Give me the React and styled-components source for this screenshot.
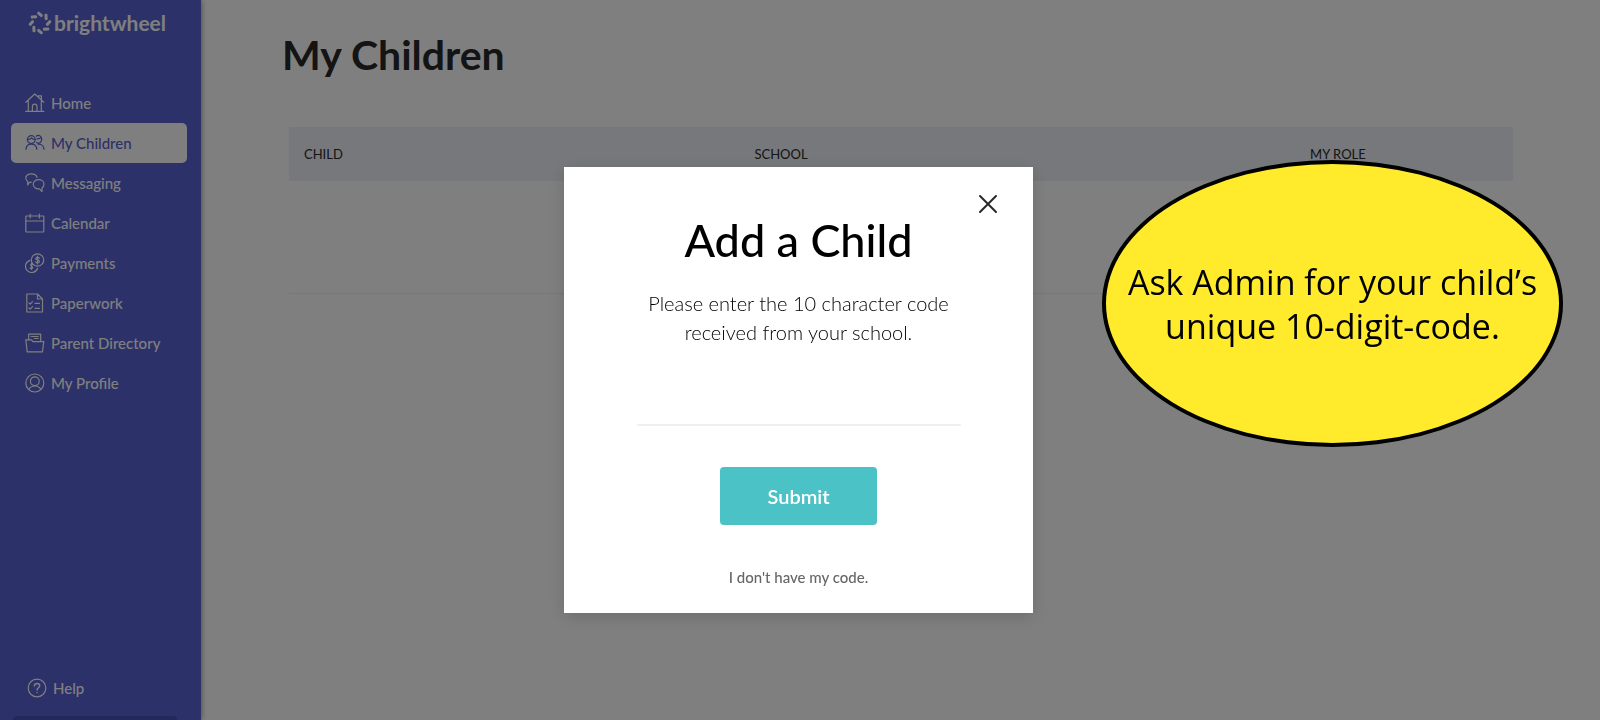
import React from 'react'
import styled, { createGlobalStyle } from 'styled-components'

const GlobalStyle = createGlobalStyle`
    * {
        box-sizing: border-box;
    }
    body {
        margin: 0;
        background: #fff;
        color: #282828;
        font-family: Lato, "Open Sans", sans-serif;
    }
`

const Page = styled.div`
    display: flex;
    min-height: 100vh;
`

const Sidebar = styled.aside`
    display: flex;
    flex-direction: column;
    flex: 0 0 201px;
    background: #5862d2;
    box-shadow: 1px 0 5px rgba(0, 0, 0, 0.35);
`

const Brand = styled.a`
    display: flex;
    align-items: center;
    gap: 2px;
    height: 63px;
    padding: 0 28px 17px;
    border-bottom: 1px solid #545ec9;
    color: #fff;
    font-size: 21px;
    font-weight: 700;
    line-height: 28px;
    text-decoration: none;
`

const Nav = styled.nav`
    display: flex;
    flex-direction: column;
    flex: 1;
    padding: 20px 14px 0 11px;
`

const NavLink = styled.a`
    display: flex;
    align-items: center;
    gap: 6px;
    height: 40px;
    padding: 0 14px;
    border-radius: 5px;
    background: ${props => props.$active ? '#fff' : 'transparent'};
    color: ${props => props.$active ? '#5862d2' : '#fff'};
    font-size: 15px;
    font-weight: 500;
    text-decoration: none;
    white-space: nowrap;
`

const SidebarFooter = styled.div`
    padding: 0 24px 0 13px;

    &::after {
        content: '';
        display: block;
        height: 4px;
        margin-top: 8px;
        border-radius: 4px 4px 0 0;
        background: #4650b8;
    }
`

const Main = styled.main`
    flex: 1;
    padding: 27px 87px 0 88px;
`

const PageTitle = styled.h1`
    margin: 0 0 44px -7px;
    font-size: 41px;
    font-weight: 700;
    line-height: 56px;
`

const ChildTable = styled.table`
    width: 100%;
    border-collapse: collapse;
    table-layout: fixed;

    th {
        height: 54px;
        padding: 0 15px;
        background: #eef0f6;
        font-size: 13px;
        font-weight: 400;
        text-align: left;
    }
    td {
        height: 112px;
        border-bottom: 1px solid #f0f0f2;
    }
`

const Column = styled.col`
    width: ${props => props.$width};
`

const Overlay = styled.div`
    position: fixed;
    inset: 0;
    display: flex;
    align-items: center;
    justify-content: center;
    padding: 60px 3px 0 0;
    background: rgba(0, 0, 0, 0.5);
`

const Modal = styled.form`
    display: flex;
    flex-direction: column;
    align-items: center;
    width: 469px;
    padding: 24px 34px 24px;
    background: #fff;
    box-shadow: 0 4px 16px rgba(0, 0, 0, 0.15);
    color: #000;
`

const CloseButton = styled.button`
    display: flex;
    align-self: flex-end;
    padding: 0;
    border: 0;
    background: none;
    color: #282828;
    cursor: pointer;
`

const ModalTitle = styled.h2`
    margin: 0;
    font-size: 45px;
    font-weight: 500;
    line-height: 46px;
`

const CodeLabel = styled.label`
    width: 324px;
    margin-top: 26px;
    font-size: 20px;
    font-weight: 300;
    line-height: 29px;
    text-align: center;
`

const CodeInput = styled.input`
    width: 324px;
    height: 50px;
    margin-top: 29px;
    border: 0;
    border-bottom: 2px solid #f0f0f0;
    background: none;
    font: inherit;
    font-size: 20px;
    text-align: center;
    outline: none;
`

const SubmitButton = styled.button`
    width: 157px;
    height: 58px;
    margin-top: 41px;
    border: 0;
    border-radius: 4px;
    background: #4bc2c5;
    color: #fff;
    font: inherit;
    font-size: 20px;
    font-weight: 600;
    cursor: pointer;
`

const NoCodeLink = styled.a`
    margin-top: 40px;
    color: #666;
    font-size: 15px;
    font-weight: 500;
    line-height: 24px;
    text-decoration: none;
`

const Callout = styled.aside`
    position: absolute;
    top: 160px;
    right: 37px;
    display: flex;
    align-items: center;
    justify-content: center;
    width: 461px;
    height: 287px;
    border: 4px solid #000;
    border-radius: 50%;
    background: #ffea2b;
    color: #000;
    font-family: "Open Sans", "Noto Sans", sans-serif;
    font-size: 34px;
    font-weight: 400;
    line-height: 44px;
    text-align: center;
    white-space: nowrap;
`

function Icon({ children }) {
    return (
        <svg width="20" height="20" viewBox="0 0 20 20" fill="none" stroke="currentColor" strokeWidth="1.2" strokeLinecap="round" strokeLinejoin="round" aria-hidden="true">
            {children}
        </svg>
    )
}

function Logo() {
    return (
        <svg width="24" height="24" viewBox="-12 -12 24 24" fill="currentColor" aria-hidden="true">
            {[0, 45, 90, 135, 180, 225, 270, 315].map(angle => (
                <g key={angle} transform={`rotate(${angle})`}>
                    <rect x="-3.2" y="-1.5" width="6.4" height="3" rx="1.2" transform="translate(0 -8.6) rotate(42)" />
                </g>
            ))}
        </svg>
    )
}

const navItems = [
    {
        label: 'Home',
        icon: <Icon><path d="M.8 9.2 9.8 1l9 8.2M3.3 8v10.2M16.3 8v10.2M.8 18.4h18M13.4 4.2V2.8h3v4M7.4 18.2v-4.7a2.3 2.3 0 0 1 4.6 0v4.7" /></Icon>
    },
    {
        label: 'My Children',
        active: true,
        icon: (
            <Icon>
                <circle cx="6.3" cy="6.6" r="3.9" />
                <path d="M2.8 6.4c1.6.2 3-.3 3.8-1.5.6 1 1.7 1.5 3.2 1.5M1 16.2c.2-3.2 2.3-5 5.3-5s5.3 1.8 5.5 5" />
                <path d="M11.2 3.2c1.2-.9 3.2-.9 4.4.2 1.5 1.4 1.5 4.2 0 5.7-1.1 1.1-2.8 1.2-4 .4M12 5.8c1.7.1 3-.3 4.2-1.3M13 11.2c3.3-.2 5.8 1.8 6 5" />
            </Icon>
        )
    },
    {
        label: 'Messaging',
        icon: (
            <Icon>
                <path d="M6.3 9.2a6 6 0 0 1-2 .2L2.7 12V8.4C1.5 7.6.8 6.4.8 5 .8 2.6 3.2.8 6.3.8s5.2 1.4 5.7 3.5" />
                <path d="M13.6 6.6c3 0 5.4 2 5.4 4.6 0 1.6-.8 2.9-2 3.8v3.5l-2.6-2.6c-3.4.3-6.2-1.8-6.2-4.7 0-2.6 2.4-4.6 5.4-4.6Z" />
            </Icon>
        )
    },
    {
        label: 'Calendar',
        icon: <Icon><rect x=".8" y="3" width="18" height="16" rx=".8" /><path d="M.8 8h18M5.2 1v4M14.4 1v4" /></Icon>
    },
    {
        label: 'Payments',
        icon: (
            <Icon>
                <circle cx="12.5" cy="7" r="6.2" />
                <path d="M14.4 5.2c-.4-.6-1-.9-1.9-.9-1 0-1.8.5-1.8 1.3 0 1.9 3.7.8 3.7 2.8 0 .9-.8 1.4-1.8 1.4-.9 0-1.6-.4-2-1M12.5 3.2v7.7" />
                <path d="M5 7.3a6.2 6.2 0 1 0 7.6 7.9M7.8 11.5c-.5-.5-1.7-.5-2.1.2-.6 1.3 2.2 1.5 2 2.9-.3 1.2-2 1.2-2.7.3M6.6 10.2v6.2" />
            </Icon>
        )
    },
    {
        label: 'Paperwork',
        icon: <Icon><path d="M1.8 1h10.7l5 5v13H1.8ZM12.5 1v5h5M4 10l1.2 1.2L7.5 8.7M4 15l1.2 1.2 2.3-2.5M10 10.3h4.5M10 15.3h4.5" /></Icon>
    },
    {
        label: 'Parent Directory',
        icon: <Icon><path d="M3.7 6.5V1.2h12v6.5M6.2 3.5h7M9.2 5.5h4M.8 6.8h5.7l1.5 1.8h10.8l-1.4 10.2H2.2Z" /></Icon>
    },
    {
        label: 'My Profile',
        icon: (
            <Icon>
                <circle cx="9.8" cy="10" r="9" />
                <circle cx="9.8" cy="8.3" r="4.4" />
                <path d="M3.8 16.4c1.3-2.3 3.4-3.4 6-3.4s4.7 1.1 6 3.4" />
            </Icon>
        )
    }
]

function App() {
    return (
        <>
            <GlobalStyle />
            <Page>
                <Sidebar>
                    <Brand href="#">
                        <Logo />
                        brightwheel
                    </Brand>
                    <Nav>
                        {navItems.map(({ label, icon, active }) => (
                            <NavLink href="#" key={label} $active={active}>
                                {icon}
                                {label}
                            </NavLink>
                        ))}
                    </Nav>
                    <SidebarFooter>
                        <NavLink href="#">
                            <Icon>
                                <circle cx="10" cy="10" r="8.8" />
                                <path d="M7.4 8c0-1.6 1.1-2.6 2.7-2.6s2.6 1 2.6 2.4c0 2-2.6 2-2.6 4.2M10.1 14.4v.2" strokeWidth="1.5" />
                            </Icon>
                            Help
                        </NavLink>
                    </SidebarFooter>
                </Sidebar>
                <Main>
                    <PageTitle>My Children</PageTitle>
                    <ChildTable>
                        <colgroup>
                            <Column $width="36.8%" />
                            <Column $width="45.4%" />
                            <Column />
                        </colgroup>
                        <thead>
                            <tr>
                                <th>CHILD</th>
                                <th>SCHOOL</th>
                                <th>MY ROLE</th>
                            </tr>
                        </thead>
                        <tbody>
                            <tr>
                                <td colSpan={3} />
                            </tr>
                        </tbody>
                    </ChildTable>
                </Main>
            </Page>
            <Overlay>
                <Modal role="dialog" aria-labelledby="modal-title" onSubmit={e => e.preventDefault()}>
                    <CloseButton type="button" aria-label="Close">
                        <svg width="22" height="26" viewBox="0 0 22 26" stroke="currentColor" strokeWidth="2" strokeLinecap="round" aria-hidden="true">
                            <path d="m3 5 16 16M19 5 3 21" />
                        </svg>
                    </CloseButton>
                    <ModalTitle id="modal-title">Add a Child</ModalTitle>
                    <CodeLabel htmlFor="code">Please enter the 10 character code received from your school.</CodeLabel>
                    <CodeInput id="code" type="text" maxLength={10} />
                    <SubmitButton type="submit">Submit</SubmitButton>
                    <NoCodeLink href="#">I don't have my code.</NoCodeLink>
                </Modal>
            </Overlay>
            <Callout>
                Ask Admin for your child’s
                <br />
                unique 10-digit-code.
            </Callout>
        </>
    )
}

export default App
